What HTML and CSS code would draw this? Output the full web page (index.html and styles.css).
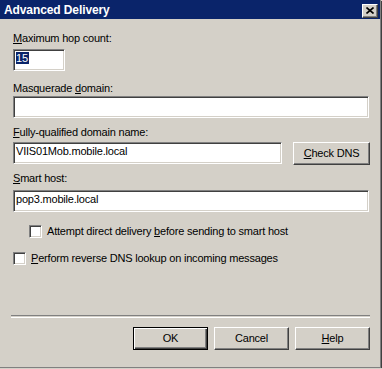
FILE: index.html
```html
<!DOCTYPE html>
<html lang="en">
<head>
    <meta charset="UTF-8">
    <title>Advanced Delivery</title>
    <link rel="stylesheet" href="styles.css">
</head>
<body>
    <div class="window">
        <div class="titlebar">
            <span class="title">Advanced Delivery</span>
            <span class="close">
                <svg width="8" height="7" viewBox="0 0 8 7">
                    <path d="M0.5 0.5 L7.5 6.5 M7.5 0.5 L0.5 6.5" stroke="#000" stroke-width="1.6"/>
                </svg>
            </span>
        </div>
        <div class="content">
            <div class="label first"><u>M</u>aximum hop count:</div>
            <div class="edit small"><span class="sel">15</span></div>

            <div class="label l2">Masquerade <u>d</u>omain:</div>
            <div class="edit wide e2"></div>

            <div class="label l3"><u>F</u>ully-qualified domain name:</div>
            <div class="row-dns">
                <div class="edit fqdn">VIIS01Mob.mobile.local</div>
                <div class="btn dns"><span><u>C</u>heck DNS</span></div>
            </div>

            <div class="label l4"><u>S</u>mart host:</div>
            <div class="edit wide e4">pop3.mobile.local</div>

            <div class="check-row c1"><span class="check"></span><span>Attempt direct delivery <u>b</u>efore sending to smart host</span></div>
            <div class="check-row c2"><span class="check"></span><span><u>P</u>erform reverse DNS lookup on incoming messages</span></div>

            <div class="separator"></div>

            <div class="buttons">
                <div class="btn default">OK</div>
                <div class="btn">Cancel</div>
                <div class="btn"><span><u>H</u>elp</span></div>
            </div>
        </div>
    </div>
</body>
</html>
```

FILE: styles.css
```css
body {
    margin: 0;
    background-color: #d4d0c8;
    font-family: "Liberation Sans", Arial, sans-serif;
    font-size: 11px;
    letter-spacing: -0.2px;
    color: #000000;
}
.window {
    width: 380px;
    height: 367px;
    background-color: #d4d0c8;
    border-right: 1px solid #808080;
    border-bottom: 1px solid #808080;
    box-shadow: 1px 1px 0 #404040;
}
.titlebar {
    height: 19px;
    background-color: #0a246a;
    display: flex;
    align-items: flex-start;
}
.title {
    color: #ffffff;
    font-weight: bold;
    font-size: 12px;
    letter-spacing: -0.1px;
    line-height: 15px;
    padding: 3px 0 0 4px;
}
.close {
    margin: 4px 2px 0 auto;
    width: 16px;
    height: 14px;
    box-sizing: border-box;
    background-color: #d4d0c8;
    border-top: 1px solid #ffffff;
    border-left: 1px solid #ffffff;
    border-right: 1px solid #404040;
    border-bottom: 1px solid #404040;
    box-shadow: inset -1px -1px 0 #808080;
    display: flex;
    align-items: center;
    justify-content: center;
    padding: 0 1px 1px 0;
}
.content {
    padding: 0 11px 0 13px;
}
.label {
    line-height: 13px;
    height: 13px;
}
.first { margin-top: 13px; }
.l2 { margin-top: 11px; }
.l3 { margin-top: 8px; }
.l4 { margin-top: 7px; }

/* sunken edit box */
.edit {
    height: 22px;
    box-sizing: border-box;
    background-color: #ffffff;
    border-top: 1px solid #808080;
    border-left: 1px solid #808080;
    border-right: 1px solid #ffffff;
    border-bottom: 1px solid #ffffff;
    box-shadow: inset 1px 1px 0 #404040, inset -1px -1px 0 #d4d0c8;
    padding: 2px 3px 0 2px;
    line-height: 13px;
    white-space: nowrap;
}
.small {
    width: 52px;
    margin-top: 4px;
}
.sel {
    background-color: #0a246a;
    color: #ffffff;
    padding: 0 1px 0 0;
}
.wide { width: 356px; }
.e2 { margin-top: 1px; }
.e4 { margin-top: 5px; }
.row-dns {
    display: flex;
    align-items: flex-start;
    margin-top: 3px;
}
.fqdn { width: 269px; }

/* raised push button */
.btn {
    width: 75px;
    height: 23px;
    box-sizing: border-box;
    background-color: #d4d0c8;
    border-top: 1px solid #ffffff;
    border-left: 1px solid #ffffff;
    border-right: 1px solid #404040;
    border-bottom: 1px solid #404040;
    box-shadow: inset -1px -1px 0 #808080;
    display: flex;
    align-items: center;
    justify-content: center;
    line-height: 13px;
    padding-bottom: 1px;
}
.dns {
    width: 77px;
    margin-left: auto;
    margin-right: -1px;
}
.btn.default {
    border: 1px solid #000000;
    box-shadow: inset 1px 1px 0 #ffffff, inset -1px -1px 0 #404040, inset -2px -2px 0 #808080;
}
.check-row {
    display: flex;
    align-items: center;
    line-height: 13px;
}
.check {
    width: 13px;
    height: 13px;
    box-sizing: border-box;
    background-color: #ffffff;
    border-top: 1px solid #808080;
    border-left: 1px solid #808080;
    border-right: 1px solid #ffffff;
    border-bottom: 1px solid #ffffff;
    box-shadow: inset 1px 1px 0 #404040, inset -1px -1px 0 #d4d0c8;
}
.c1 {
    margin-top: 13px;
    margin-left: 16px;
    gap: 5px;
}
.c2 {
    margin-top: 14px;
    gap: 5px;
}
.separator {
    margin: 50px 0 0 -2px;
    width: 359px;
    height: 1px;
    border-top: 1px solid #808080;
    border-bottom: 1px solid #ffffff;
}
.buttons {
    display: flex;
    justify-content: flex-end;
    gap: 6px;
    margin: 9px -1px 0 0;
}
```
